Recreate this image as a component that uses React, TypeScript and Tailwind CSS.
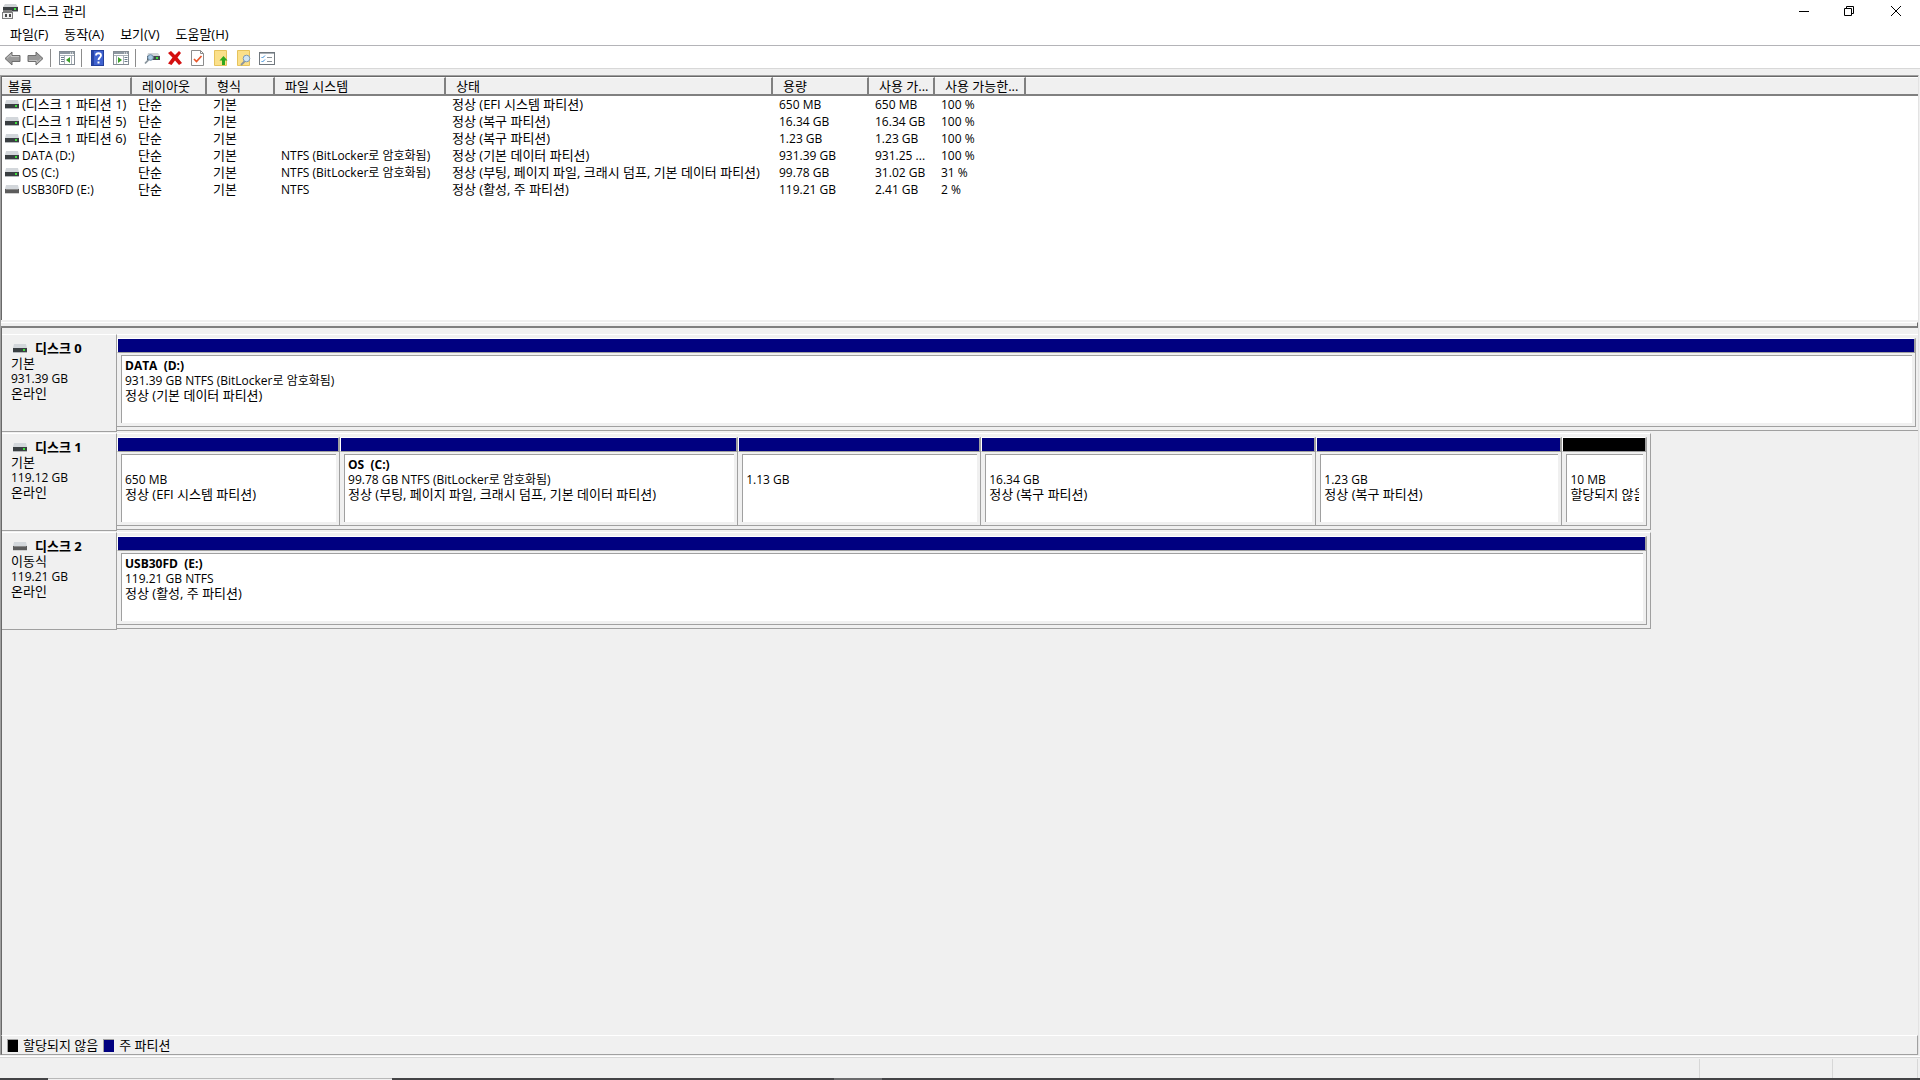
import React from "react";

type IconProps = { className?: string };

const DiskIcon = ({ removable = false }: { removable?: boolean }) => (
  <svg viewBox="0 0 14 9" className="h-[9px] w-[14px] shrink-0" aria-hidden="true">
    <path d="M1 0h12l1 4H0z" fill="#d3d7db" />
    <rect x="0" y="4" width="14" height="4" fill={removable ? "#5c5c5c" : "#3a3f42"} />
    <rect x="0" y="8" width="14" height="1" fill={removable ? "#d0d0d0" : "#b4b8bb"} />
    {removable ? (
      <rect x="1" y="4" width="12" height="1" fill="#8a8a8a" />
    ) : (
      <rect x="10" y="5" width="2" height="2" fill="#3de03d" />
    )}
  </svg>
);

const AppIcon = () => (
  <svg viewBox="0 0 16 16" className="h-4 w-4 shrink-0" aria-hidden="true">
    <path d="M3 1h11l2 3H1z" fill="#d0d3d6" />
    <rect x="1" y="4" width="15" height="4" fill="#3a3f42" />
    <rect x="1" y="8" width="15" height="1" fill="#a4a8ab" />
    <rect x="12" y="5" width="2" height="2" fill="#3de03d" />
    <path d="M1 7h9v2h1v7H0V9h1z" fill="#7d7d7d" />
    <rect x="1" y="10" width="9" height="5" fill="#f2f2f2" />
    <path d="M3 11h2v3H3zM7 11h2v3H7z" fill="#4a4a4a" />
  </svg>
);

const ArrowIcon = ({ className = "" }: IconProps) => (
  <svg viewBox="0 0 17 15" className={"h-[15px] w-[17px] " + className} aria-hidden="true">
    <path d="M1 7.5 8 1v3.5h8v6H8V14z" fill="#9a9a9a" stroke="#6f6f6f" strokeLinejoin="round" />
    <path d="M3 7.3 7 3.5v2h8" fill="none" stroke="#c4c4c4" />
  </svg>
);

const PaneIcon = ({ right = false }: { right?: boolean }) => (
  <svg viewBox="0 0 16 14" className="h-[14px] w-4" aria-hidden="true">
    <rect x=".5" y=".5" width="15" height="13" fill="#fff" stroke="#848c94" />
    <rect x="1" y="1" width="14" height="2" fill="#8d97a1" />
    <path d="M11 2h1M13 2h1" stroke="#fff" />
    <path d="M1 4.5h14" stroke="#a8b0b8" />
    {right ? (
      <>
        <path d="M10.5 5v8M3.5 5v8" stroke="#a8b0b8" />
        <path d="M11.5 6.5h3M11.5 8.5h3M11.5 10.5h3" stroke="#6b7c8c" />
        <path d="M5 6v6l4-3z" fill="#3a9f28" />
      </>
    ) : (
      <>
        <path d="M5.5 5v8M12.5 5v8" stroke="#a8b0b8" />
        <path d="M2 6.5h3M2 8.5h3M2 10.5h3" stroke="#6b7c8c" />
        <path d="M11 6v6L7 9z" fill="#3a9f28" />
      </>
    )}
  </svg>
);

const HelpIcon = () => (
  <svg viewBox="0 0 13 16" className="h-4 w-[13px]" aria-hidden="true">
    <rect x=".5" y=".5" width="12" height="15" fill="#3f62cf" stroke="#23409c" />
    <path d="M1 1h2v14H1z" fill="#2745a8" />
    <path d="M5 5.5C5 2.500 10 2.500 10 5.500 10 7.500 7.500 7.500 7.500 10" fill="none" stroke="#fff" strokeWidth="1.800" />
    <rect x="6.500" y="11.500" width="2" height="2" fill="#fff" />
  </svg>
);

const ConnectIcon = () => (
  <svg viewBox="0 0 16 14" className="h-[14px] w-4" aria-hidden="true">
    <path d="M4 2h10l2 3H3z" fill="#d0d4d8" />
    <rect x="3" y="5" width="13" height="4" fill="#43494d" />
    <rect x="12" y="6" width="2" height="2" fill="#3de03d" />
    <circle cx="6.500" cy="6.500" r="2.800" fill="#a9c9e4" stroke="#6c8ba6" />
    <path d="M4.500 8.800 1 12.500" stroke="#8a959e" strokeWidth="1.800" />
  </svg>
);

const DeleteIcon = () => (
  <svg viewBox="0 0 14 14" className="h-[14px] w-[14px]" aria-hidden="true">
    <path d="M0 2 3 0l4 4 4-4 2 2-3.500 4.500L14 12l-3 2-4-4.500L3.500 14 0 12.500l4.500-6z" fill="#d40f0f" />
  </svg>
);

const CheckDocIcon = () => (
  <svg viewBox="0 0 13 16" className="h-4 w-[13px]" aria-hidden="true">
    <path d="M.5.5h9l3 3v12H.5z" fill="#fff" stroke="#8c8c8c" />
    <path d="M9.500.5v3h3" fill="none" stroke="#8c8c8c" />
    <path d="m3 9 2.500 2.500L10.500 6" fill="none" stroke="#e8562a" strokeWidth="1.700" />
  </svg>
);

const FolderUpIcon = () => (
  <svg viewBox="0 0 14 16" className="h-4 w-[14px]" aria-hidden="true">
    <path d="M.5.5h12v15H.5z" fill="#fbe08a" stroke="#e6c35c" />
    <path d="M9.500 6 13.500 10.500h-2.500V15H8v-4.500H5.500z" fill="#2fa81d" />
  </svg>
);

const FolderSearchIcon = () => (
  <svg viewBox="0 0 14 16" className="h-4 w-[14px]" aria-hidden="true">
    <path d="M.5.5h12v15H.5z" fill="#fbe08a" stroke="#e6c35c" />
    <path d="M8 11 4 15" stroke="#8a959e" strokeWidth="1.800" />
    <circle cx="9.500" cy="8.500" r="3.300" fill="#cfe5f6" stroke="#7f9ab3" />
  </svg>
);

const ListIcon = () => (
  <svg viewBox="0 0 16 13" className="h-[13px] w-4" aria-hidden="true">
    <rect x=".5" y=".5" width="15" height="12" fill="#fff" stroke="#70777d" />
    <path d="M1 1h14v1H1z" fill="#a9b0b6" />
    <path d="m2.500 5 1 1L6 3.500M2.500 9l1 1L6 7.500" fill="none" stroke="#3a8fd8" />
    <path d="M8 5.500h5M8 9.500h5" stroke="#8c9499" />
  </svg>
);

const Separator = () => <span className="mr-1 ml-[3px] h-[18px] w-px bg-[#8c8c8c]" />;

const ToolButton = ({ label, children }: { label: string; children: React.ReactNode }) => (
  <button aria-label={label} className="flex h-5 w-[23px] shrink-0 items-center justify-center">
    {children}
  </button>
);

// Hangul labels are set one step larger than Latin ones.
const textSize = (text = "") => (/^\(?[가-힣]/.test(text) ? "text-[13px]" : "text-[12px]");

const columns = [
  { label: "볼륨", width: "w-[130px]" },
  { label: "레이아웃", width: "w-[75px]" },
  { label: "형식", width: "w-[68px]" },
  { label: "파일 시스템", width: "w-[171px]" },
  { label: "상태", width: "w-[327px]" },
  { label: "용량", width: "w-[96px]" },
  { label: "사용 가...", width: "w-[66px]" },
  { label: "사용 가능한...", width: "w-[91px]" },
];

const volumes = [
  ["(디스크 1 파티션 1)", "단순", "기본", "", "정상 (EFI 시스템 파티션)", "650 MB", "650 MB", "100 %"],
  ["(디스크 1 파티션 5)", "단순", "기본", "", "정상 (복구 파티션)", "16.34 GB", "16.34 GB", "100 %"],
  ["(디스크 1 파티션 6)", "단순", "기본", "", "정상 (복구 파티션)", "1.23 GB", "1.23 GB", "100 %"],
  ["DATA (D:)", "단순", "기본", "NTFS (BitLocker로 암호화됨)", "정상 (기본 데이터 파티션)", "931.39 GB", "931.25 ...", "100 %"],
  ["OS (C:)", "단순", "기본", "NTFS (BitLocker로 암호화됨)", "정상 (부팅, 페이지 파일, 크래시 덤프, 기본 데이터 파티션)", "99.78 GB", "31.02 GB", "31 %"],
  ["USB30FD (E:)", "단순", "기본", "NTFS", "정상 (활성, 주 파티션)", "119.21 GB", "2.41 GB", "2 %"],
];

type Partition = { share: number; name?: string; size: string; status?: string; free?: boolean };
type Disk = { name: string; kind: string; size: string; removable?: boolean; width: string; parts: Partition[] };

const disks: Disk[] = [
  {
    name: "디스크 0", kind: "기본", size: "931.39 GB", width: "w-[calc(100%+2px)]",
    parts: [{ share: 1, name: "DATA  (D:)", size: "931.39 GB NTFS (BitLocker로 암호화됨)", status: "정상 (기본 데이터 파티션)" }],
  },
  {
    name: "디스크 1", kind: "기본", size: "119.12 GB", width: "w-[85.2%]",
    parts: [
      { share: 223, size: "650 MB", status: "정상 (EFI 시스템 파티션)" },
      { share: 398, name: "OS  (C:)", size: "99.78 GB NTFS (BitLocker로 암호화됨)", status: "정상 (부팅, 페이지 파일, 크래시 덤프, 기본 데이터 파티션)" },
      { share: 243, size: "1.13 GB" },
      { share: 335, size: "16.34 GB", status: "정상 (복구 파티션)" },
      { share: 246, size: "1.23 GB", status: "정상 (복구 파티션)" },
      { share: 85, size: "10 MB", status: "할당되지 않음", free: true },
    ],
  },
  {
    name: "디스크 2", kind: "이동식", size: "119.21 GB", removable: true, width: "w-[85.2%]",
    parts: [{ share: 1, name: "USB30FD  (E:)", size: "119.21 GB NTFS", status: "정상 (활성, 주 파티션)" }],
  },
];

const PartitionCell = ({ part }: { part: Partition }) => (
  <button className="flex min-w-0 basis-0 flex-col text-left" style={{ flexGrow: part.share }}>
    <span
      className={
        "h-[15px] w-full border-t border-r-2 border-b border-l border-t-white border-r-[#a0a0a0] border-b-[#a0a0a0] border-l-white " +
        (part.free ? "bg-black" : "bg-[#000080]")
      }
    />
    <span className="flex w-full border-r border-b border-[#a0a0a0] bg-[#f0f0f0] pt-0.5 pr-[3px] pb-[3px] pl-1">
      <span className="h-[68px] w-full min-w-0 overflow-hidden border-t border-l border-[#a0a0a0] bg-white pt-0.5 pr-1 pl-[3px]">
        <span className="block overflow-hidden leading-[15px] whitespace-pre">
          <span className="block h-[15px] font-bold">{part.name}</span>
          <span className="block h-[15px]">{part.size}</span>
          <span className="block h-[15px] text-[13px]">{part.status}</span>
        </span>
      </span>
    </span>
  </button>
);

const DiskRow = ({ disk }: { disk: Disk }) => (
  <section className="mb-px flex h-[98px]">
    <div className="w-[115px] shrink-0 border-t border-r border-b border-t-white border-r-[#a0a0a0] border-b-[#a0a0a0] pt-1.5 pl-[9px] text-[13px] leading-[15px]">
      <h2 className="flex items-center gap-2 pl-0.5 font-bold">
        <DiskIcon removable={disk.removable} />
        {disk.name}
      </h2>
      <p>{disk.kind}</p>
      <p className="text-[12px] leading-[15px]">{disk.size}</p>
      <p>온라인</p>
    </div>
    <div className="min-w-0 grow">
      <div className={"flex h-[97px] border-t border-r border-b border-t-white border-r-[#a0a0a0] border-b-[#a0a0a0] pt-[3px] pr-[3px] " + disk.width}>
        {disk.parts.map((part, i) => (
          <PartitionCell key={i} part={part} />
        ))}
      </div>
    </div>
  </section>
);

const Legend = ({ color, label }: { color: string; label: string }) => (
  <span className="flex items-center gap-[5px] text-[13px] leading-4">
    <span className={"h-[13px] w-[11px] border-t border-l border-[#a0a0a0] " + color} />
    {label}
  </span>
);

export default function App() {
  return (
    <div className="flex h-screen flex-col overflow-hidden bg-[#f0f0f0] font-['Open_Sans','Noto_Sans_CJK_KR',sans-serif] text-[12px] leading-4 text-black">
      <header className="border-b border-[#b4b4b8] bg-white text-[13px]">
        <div className="flex h-[22px] items-center justify-between">
          <h1 className="flex items-center gap-[5px] pl-0.5">
            <AppIcon />
            디스크 관리
          </h1>
          <div className="flex">
            <button aria-label="최소화" className="flex h-[22px] w-[45px] items-center justify-center">
              <svg viewBox="0 0 10 10" className="h-2.5 w-2.5"><path d="M0 5.500h10" stroke="#000" /></svg>
            </button>
            <button aria-label="이전 크기로 복원" className="flex h-[22px] w-[45px] items-center justify-center">
              <svg viewBox="0 0 10 10" className="h-2.5 w-2.5" fill="none" stroke="#000"><path d="M.5 2.500h7v7h-7zM2.500 2.500v-2h7v7h-2" /></svg>
            </button>
            <button aria-label="닫기" className="flex h-[22px] w-[49px] items-center justify-center">
              <svg viewBox="0 0 10 10" className="h-2.5 w-2.5"><path d="m0 0 10 10M10 0 0 10" stroke="#000" /></svg>
            </button>
          </div>
        </div>
        <nav className="flex h-[23px] items-center gap-4 pl-2.5">
          {["파일(F)", "동작(A)", "보기(V)", "도움말(H)"].map((item) => (
            <button key={item}>{item}</button>
          ))}
        </nav>
      </header>

      <div role="toolbar" className="mb-[6px] flex h-[23px] shrink-0 items-center border-b border-[#d8d8d8] bg-white pt-0.5 pl-px">
        <ToolButton label="뒤로"><ArrowIcon /></ToolButton>
        <ToolButton label="앞으로"><ArrowIcon className="rotate-180" /></ToolButton>
        <Separator />
        <ToolButton label="콘솔 트리 표시"><PaneIcon /></ToolButton>
        <Separator />
        <ToolButton label="도움말"><HelpIcon /></ToolButton>
        <ToolButton label="작업 창 표시"><PaneIcon right /></ToolButton>
        <Separator />
        <ToolButton label="연결"><ConnectIcon /></ToolButton>
        <ToolButton label="삭제"><DeleteIcon /></ToolButton>
        <ToolButton label="속성"><CheckDocIcon /></ToolButton>
        <ToolButton label="위로"><FolderUpIcon /></ToolButton>
        <ToolButton label="찾기"><FolderSearchIcon /></ToolButton>
        <ToolButton label="목록"><ListIcon /></ToolButton>
      </div>

      <main className="mr-px flex min-h-0 grow flex-col border-t border-r border-l border-t-[#a0a0a0] border-r-[#e3e3e3] border-l-[#a0a0a0]">
        <section className="h-[244px] shrink-0 overflow-hidden border-t border-l border-[#696969] bg-white">
          <table className="w-full table-fixed border-separate border-spacing-0">
            <thead>
              <tr className="bg-[#f0f0f0]">
                {columns.map((c, i) => (
                  <th
                    key={c.label}
                    className={
                      "overflow-hidden border-t border-r-2 border-b-2 border-t-white border-r-[#808080] border-b-[#808080] py-0 pr-0 text-left text-[13px] leading-4 font-normal whitespace-nowrap " +
                      c.width + (i === 0 ? " pl-1.5" : " pl-2.5")
                    }
                  >
                    {c.label}
                  </th>
                ))}
                <th className="border-t border-b-2 border-t-white border-b-[#808080]" />
              </tr>
            </thead>
            <tbody>
              {volumes.map((row, r) => (
                <tr key={row[0]} className="h-[17px]">
                  {row.map((text, i) => (
                    <td
                      key={i}
                      className={"py-0 pr-0 leading-[17px] whitespace-nowrap " + textSize(text) + (i === 0 ? " pl-[3px]" : " pl-1.5")}
                    >
                      {i === 0 ? (
                        <span className="flex items-center gap-[3px] leading-[17px]">
                          <DiskIcon removable={r === 5} />
                          {text}
                        </span>
                      ) : (
                        text
                      )}
                    </td>
                  ))}
                  <td />
                </tr>
              ))}
            </tbody>
          </table>
        </section>

        <div className="h-2 shrink-0 bg-[#f0f0f0] pt-0.5">
          <div className="h-1.5 border-t border-r border-b-2 border-t-white border-r-[#696969] border-b-[#808080]" />
        </div>

        <section className="min-h-0 grow overflow-hidden border-l border-[#696969] pt-1.5">
          {disks.map((disk) => (
            <DiskRow key={disk.name} disk={disk} />
          ))}
        </section>

        <div className="flex h-5 shrink-0 items-center gap-[5px] border-t border-r border-b border-l border-t-white border-r-[#a0a0a0] border-b-[#a0a0a0] border-l-[#696969] pl-[5px]">
          <Legend color="bg-black" label="할당되지 않음" />
          <Legend color="bg-[#000080]" label="주 파티션" />
        </div>
      </main>

      <footer className="mt-px shrink-0 border-t border-white">
        <div className="flex h-[21px] border-t border-[#d7d7d7] pt-px">
          <span className="grow border-r border-[#d7d7d7]" />
          <span className="w-[133px] border-r border-[#d7d7d7]" />
          <span className="w-[85px] border-r border-[#d7d7d7]" />
          <span className="w-0.5" />
        </div>
        <div className="flex h-0.5 bg-[#444446]">
          <span className="ml-12 w-[344px] border-t border-[#b8b8b8] bg-[#f0f0f0]" />
          <span className="ml-[442px] w-12 bg-[#6b6b6d]" />
        </div>
      </footer>
    </div>
  );
}
